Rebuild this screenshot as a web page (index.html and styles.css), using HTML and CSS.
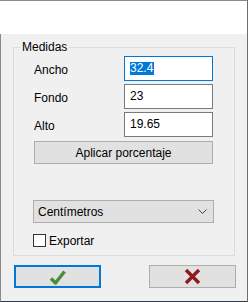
FILE: index.html
```html
<!DOCTYPE html>
<html>

<head lang="es">
    <meta charset="UTF-8">
    <title>Medidas</title>
    <link rel="stylesheet" href="styles.css">
</head>

<body>
    <div class="window">
        <div class="titlebar"></div>
        <div class="content">
            <fieldset class="group">
                <legend>Medidas</legend>
                <div class="fields">
                    <label>Ancho</label>
                    <div class="textbox focused"><span class="sel">32.4</span></div>
                    <label>Fondo</label>
                    <div class="textbox">23</div>
                    <label>Alto</label>
                    <div class="textbox">19.65</div>
                </div>
                <button class="btn apply">Aplicar porcentaje</button>
                <div class="combo">
                    <span>Centímetros</span>
                    <svg width="9" height="5" viewBox="0 0 9 5"><path d="M0.5 0.5 L4.5 4.5 L8.5 0.5" fill="none" stroke="#444" stroke-width="1"/></svg>
                </div>
                <label class="check"><span class="box"></span>Exportar</label>
            </fieldset>
            <!-- botones aceptar / cancelar -->
            <div class="actions">
                <button class="btn ok">
                    <svg width="17" height="16" viewBox="0 0 17 16"><path d="M2 9.5 L6.5 14 L15.5 2.5" fill="none" stroke="#4a8c38" stroke-width="3.4" stroke-linejoin="round"/></svg>
                </button>
                <button class="btn cancel">
                    <svg width="17" height="17" viewBox="0 0 17 17"><path d="M2 2 L15 15 M15 2 L2 15" fill="none" stroke="#8e1b1b" stroke-width="3.4"/></svg>
                </button>
            </div>
        </div>
    </div>
</body>

</html>
```

FILE: styles.css
```css
* {
    padding: 0;
    margin: 0;
    box-sizing: border-box;
}

body {
    background: #ffffff;
    font-family: "Liberation Sans", Arial, sans-serif;
    font-size: 12px;
    color: #000000;
}

.window {
    width: 248px;
    height: 302px;
    border-right: 1px solid #6e6e6e;
    display: flex;
    flex-direction: column;
}

.titlebar {
    height: 34px;
    background: #ffffff;
    border-top: 1px solid #8a8a8a;
}

.content {
    flex: 1;
    background: #f0f0f0;
    border-left: 1px solid #8a8a8a;
    border-bottom: 1px solid #2f3b4c;
    padding-top: 5px;
}

.group {
    margin: 0 12px;
    padding: 0 21px 8px 20px;
    border: 1px solid #dcdcdc;
    min-width: 0;
}

.group legend {
    margin-left: -14px;
    padding: 0 2px;
    line-height: 16px;
}

.fields {
    display: grid;
    grid-template-columns: 90px 89px;
    grid-auto-rows: 25px;
    row-gap: 3px;
    align-items: center;
    margin-top: 1px;
}

.fields label {
    padding-top: 2px;
}

.textbox {
    height: 25px;
    border: 1px solid #7a7a7a;
    background: #ffffff;
    padding: 0 5px;
    line-height: 23px;
}

.textbox.focused {
    border-color: #0078d7;
}

.sel {
    background: #0078d7;
    color: #ffffff;
    display: inline-block;
    line-height: 13px;
    padding-right: 1px;
}

.btn {
    display: flex;
    align-items: center;
    justify-content: center;
    height: 23px;
    background: #e1e1e1;
    border: 1px solid #adadad;
    font-family: inherit;
    font-size: 12px;
    color: #000000;
}

.apply {
    width: 179px;
    margin-top: 4px;
}

.combo {
    display: flex;
    align-items: center;
    justify-content: space-between;
    width: 181px;
    height: 23px;
    margin: 36px 0 0 -1px;
    padding: 0 6px 0 4px;
    background: #e1e1e1;
    border: 1px solid #adadad;
}

.check {
    display: flex;
    align-items: center;
    height: 13px;
    margin-top: 11px;
    margin-left: -1px;
}

.check .box {
    width: 13px;
    height: 13px;
    border: 1px solid #333333;
    background: #ffffff;
    margin-right: 3px;
}

.actions {
    display: flex;
    justify-content: space-between;
    padding: 0 11px 0 13px;
    margin-top: 9px;
}

.ok,
.cancel {
    width: 87px;
}

.ok {
    border: 2px solid #0078d7;
}
```
